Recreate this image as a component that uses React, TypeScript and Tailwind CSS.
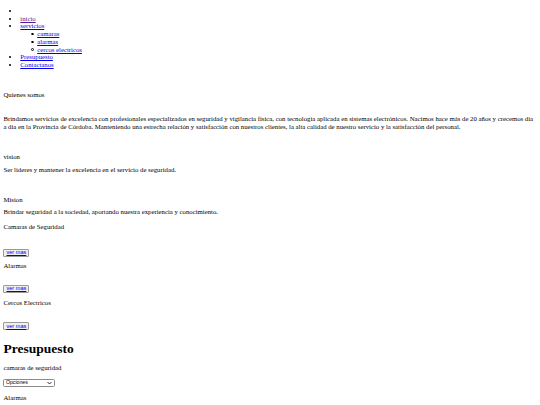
import React from 'react'

// página sin estilos, vista a escala (1280 → 540)
const link = 'text-[#0000ee] underline'

const VerMas: React.FC<{ mt: string }> = ({ mt }) => (
  <div className={mt}>
    <button className="flex h-[8px] w-[26px] items-center justify-center rounded-[1px] border-[0.5px] border-[#9a9a9a] bg-[#efefef] font-['Liberation_Sans',sans-serif] text-[5.6px] leading-none">
      <span className={link}>ver mas</span>
    </button>
  </div>
)

// viñeta circular (el marcador nativo sale relleno a este tamaño)
const SubItem: React.FC<{ children: React.ReactNode }> = ({ children }) => (
  <li className="relative">
    <span className="absolute left-[-6px] top-[2.8px] h-[2.4px] w-[2.4px] rounded-full border-[0.5px] border-black" />
    {children}
  </li>
)

const App: React.FC = () => {
  return (
    <div className="min-h-[405px] bg-white px-[3.4px] font-['Liberation_Serif',serif] text-[6.75px] leading-[7.76px] text-black">
      {/* menu */}
      <ul className="mt-[6.75px] list-disc pl-[16.9px]">
        <li></li>
        <li><a className="text-[#551a8b] underline">inicio</a></li>
        <li>
          <a className={link}>servicios</a>
          <ul className="list-none pl-[16.9px]">
            <SubItem><a className={link}>camaras</a></SubItem>
            <SubItem><a className={link}>alarmas</a></SubItem>
            <SubItem><a className={link}>cercos electricos</a></SubItem>
          </ul>
        </li>
        <li><a className={link}>Presupuesto</a></li>
        <li><a className={link}>Contactanos</a></li>
      </ul>

      <p className="mt-[22.3px]">Quienes somos</p>
      <p className="mt-[16.2px]">
        Brindamos servicios de excelencia con profesionales especializados en seguridad y vigilancia física, con tecnología aplicada en sistemas electrónicos. Nacimos hace más de 20 años y crecemos dia a dia en la Provincia de Córdoba. Manteniendo una estrecha relación y satisfacción con nuestros clientes, la alta calidad de nuestro servicio y la satisfacción del personal.
      </p>

      <p className="mt-[22.5px]">vision</p>
      <p className="mt-[4.7px]">Ser lideres y mantener la excelencia en el servicio de seguridad.</p>

      <p className="mt-[22.3px]">Mision</p>
      <p className="mt-[4.7px]">Brindar seguridad a la sociedad, aportando nuestra experiencia y conocimiento.</p>

      {/* servicios */}
      <p className="mt-[6.75px]">Camaras de Seguridad</p>
      <VerMas mt="mt-[18.1px]" />
      <p className="mt-[5.6px]">Alarmas</p>
      <VerMas mt="mt-[15.1px]" />
      <p className="mt-[5.6px]">Cercos Electricos</p>
      <VerMas mt="mt-[16.1px]" />

      {/* presupuesto */}
      <h1 className="mt-[10.7px] text-[13.5px] font-bold leading-[15.5px]">Presupuesto</h1>
      <p className="mt-[7.4px]">camaras de seguridad</p>
      <div className="mt-[7.3px]">
        <div className="flex h-[7.5px] w-[52px] items-center justify-between rounded-[1.5px] border-[0.5px] border-[#8a8a8a] bg-white px-[1.5px] font-['Liberation_Sans',sans-serif] text-[5.2px] leading-none">
          <span>Opciones</span>
          <svg width="5" height="4" viewBox="0 0 10 6" className="mr-[1px]">
            <path d="M1 1l4 4 4-4" fill="none" stroke="black" strokeWidth="1.6" />
          </svg>
        </div>
      </div>
      <p className="mt-[7.4px]">Alarmas</p>
    </div>
  )
}

export default App
